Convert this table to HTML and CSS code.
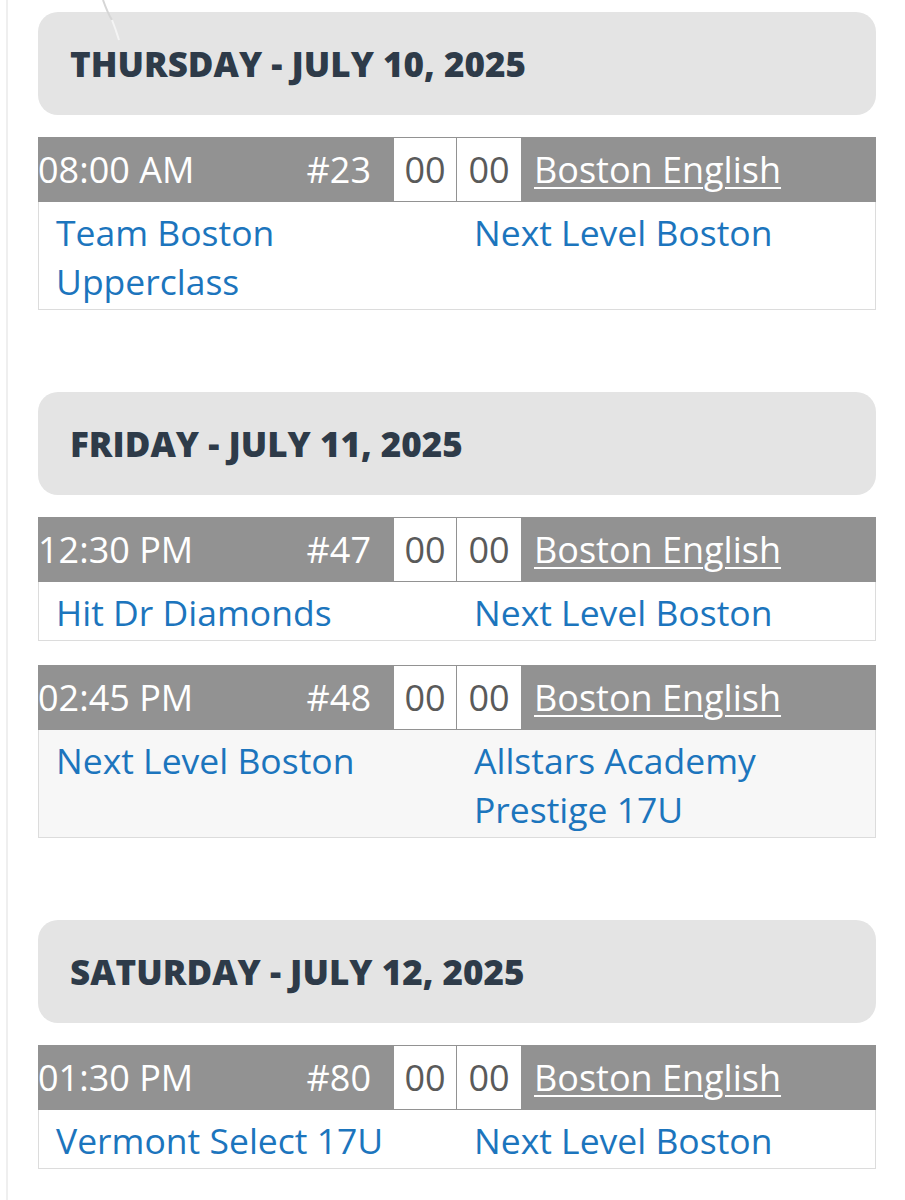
FILE: index.html
```html
<!DOCTYPE html>
<html lang="en">
<head>
<meta charset="utf-8">
<title>Schedule</title>
<link rel="stylesheet" href="styles.css">
</head>
<body>
<div class="page">
  <svg class="scratch" width="40" height="50" viewBox="0 0 40 50" aria-hidden="true">
    <path d="M3 0 Q8 14 12 20" stroke="#d6d6d6" stroke-width="2" fill="none"/>
    <path d="M12 20 Q16 30 19 40" stroke="#f4f4f4" stroke-width="2" fill="none"/>
  </svg>

  <section class="day">
    <h2 class="day-title">THURSDAY - JULY 10, 2025</h2>
    <div class="game">
      <div class="game-head">
        <span class="time">08:00 AM</span>
        <span class="num">#23</span>
        <span class="score">00</span>
        <span class="score">00</span>
        <span class="loc"><a href="#">Boston English</a></span>
      </div>
      <div class="game-teams">
        <a class="team" href="#">Team Boston Upperclass</a>
        <a class="team" href="#">Next Level Boston</a>
      </div>
    </div>
  </section>

  <section class="day">
    <h2 class="day-title">FRIDAY - JULY 11, 2025</h2>
    <div class="game">
      <div class="game-head">
        <span class="time">12:30 PM</span>
        <span class="num">#47</span>
        <span class="score">00</span>
        <span class="score">00</span>
        <span class="loc"><a href="#">Boston English</a></span>
      </div>
      <div class="game-teams">
        <a class="team" href="#">Hit Dr Diamonds</a>
        <a class="team" href="#">Next Level Boston</a>
      </div>
    </div>
    <div class="game alt">
      <div class="game-head">
        <span class="time">02:45 PM</span>
        <span class="num">#48</span>
        <span class="score">00</span>
        <span class="score">00</span>
        <span class="loc"><a href="#">Boston English</a></span>
      </div>
      <div class="game-teams">
        <a class="team" href="#">Next Level Boston</a>
        <a class="team" href="#">Allstars Academy Prestige 17U</a>
      </div>
    </div>
  </section>

  <section class="day">
    <h2 class="day-title">SATURDAY - JULY 12, 2025</h2>
    <div class="game">
      <div class="game-head">
        <span class="time">01:30 PM</span>
        <span class="num">#80</span>
        <span class="score">00</span>
        <span class="score">00</span>
        <span class="loc"><a href="#">Boston English</a></span>
      </div>
      <div class="game-teams">
        <a class="team" href="#">Vermont Select 17U</a>
        <a class="team" href="#">Next Level Boston</a>
      </div>
    </div>
  </section>
</div>
</body>
</html>
```

FILE: styles.css
```css
* { box-sizing: border-box; }

html, body {
  margin: 0;
  padding: 0;
  background: #ffffff;
}

body {
  font-family: "Open Sans", "Liberation Sans", sans-serif;
}

.page {
  position: relative;
  margin-left: 6px;
  border-left: 2px solid #efefef;
  padding: 12px 29px 40px 30px;
  min-height: 1200px;
  display: flex;
  flex-direction: column;
  gap: 82px;
}

.scratch {
  position: absolute;
  left: 92px;
  top: 0;
}

.day {
  display: flex;
  flex-direction: column;
  gap: 22px;
}

.day-title {
  margin: 0;
  height: 103px;
  line-height: 103px;
  padding: 0 32px;
  background: #e4e4e4;
  border-radius: 20px;
  color: #2e3b49;
  font-size: 35px;
  font-weight: 800;
  letter-spacing: 0;
}

.game + .game { margin-top: 2px; }

.game-head {
  display: flex;
  align-items: stretch;
  height: 65px;
  background: #929292;
  color: #ffffff;
  font-size: 36px;
  line-height: 65px;
  overflow: hidden;
}

.time {
  flex: 1;
  white-space: nowrap;
}

.num {
  padding-right: 22px;
  white-space: nowrap;
}

.score {
  width: 64px;
  background: #ffffff;
  border: 1px solid #929292;
  color: #5a5a5a;
  text-align: center;
  line-height: 63px;
}

.score + .score { border-left: 0; width: 65px; }

.loc {
  width: 354px;
  padding-left: 12px;
  white-space: nowrap;
}

.loc a {
  color: #ffffff;
  text-decoration: underline;
  text-decoration-thickness: 2px;
  text-underline-offset: 4px;
}

.game-teams {
  display: grid;
  grid-template-columns: 1fr 1fr;
  border: 1px solid #dcdcdc;
  border-top: 0;
  background: #ffffff;
  padding: 6px 0 3px;
  font-size: 35.5px;
  line-height: 49px;
}

.game.alt .game-teams { background: #f7f7f7; }

.team {
  padding: 0 17px;
  color: #1c75bd;
  text-decoration: none;
}
```
